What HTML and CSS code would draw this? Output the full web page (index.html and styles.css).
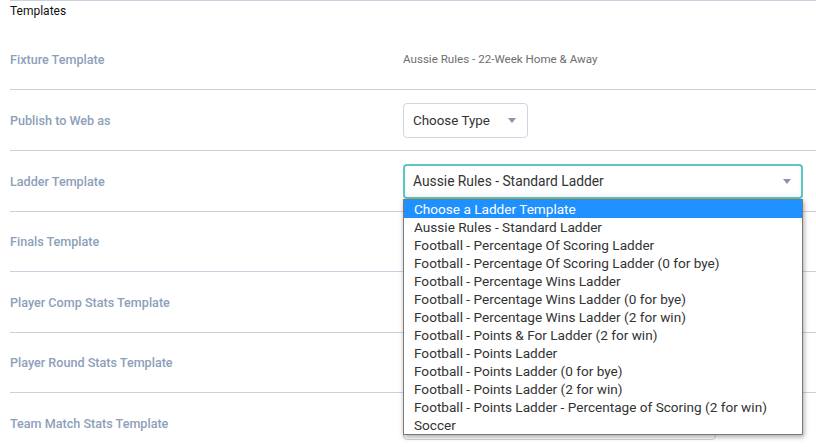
FILE: index.html
```html
<!DOCTYPE html>
<html>
<head>
<meta charset="utf-8">
<link rel="stylesheet" href="styles.css">
</head>
<body>
<div class="panel">
  <div class="header">Templates</div>
  <div class="row first">
    <div class="label">Fixture Template</div>
    <div class="value"><span class="static">Aussie Rules - 22-Week Home &amp; Away</span></div>
  </div>
  <div class="row">
    <div class="label">Publish to Web as</div>
    <div class="value"><div class="select small"><span>Choose Type</span><i class="caret"></i></div></div>
  </div>
  <div class="row">
    <div class="label">Ladder Template</div>
    <div class="value">
      <div class="select wide focus"><span>Aussie Rules - Standard Ladder</span><i class="caret"></i></div>
      <ul class="dropdown">
        <li class="active">Choose a Ladder Template</li>
        <li>Aussie Rules - Standard Ladder</li>
        <li>Football - Percentage Of Scoring Ladder</li>
        <li>Football - Percentage Of Scoring Ladder (0 for bye)</li>
        <li>Football - Percentage Wins Ladder</li>
        <li>Football - Percentage Wins Ladder (0 for bye)</li>
        <li>Football - Percentage Wins Ladder (2 for win)</li>
        <li>Football - Points &amp; For Ladder (2 for win)</li>
        <li>Football - Points Ladder</li>
        <li>Football - Points Ladder (0 for bye)</li>
        <li>Football - Points Ladder (2 for win)</li>
        <li>Football - Points Ladder - Percentage of Scoring (2 for win)</li>
        <li>Soccer</li>
      </ul>
    </div>
  </div>
  <div class="row">
    <div class="label">Finals Template</div>
    <div class="value"><div class="select mid"><span></span><i class="caret"></i></div></div>
  </div>
  <div class="row">
    <div class="label">Player Comp Stats Template</div>
    <div class="value"><div class="select mid"><span></span><i class="caret"></i></div></div>
  </div>
  <div class="row">
    <div class="label">Player Round Stats Template</div>
    <div class="value"><div class="select mid"><span></span><i class="caret"></i></div></div>
  </div>
  <div class="row">
    <div class="label">Team Match Stats Template</div>
    <div class="value"><div class="select mid"><span></span><i class="caret"></i></div></div>
  </div>
</div>
</body>
</html>
```
FILE: styles.css
```css
html, body {
  margin: 0;
  padding: 0;
  background: #fff;
  overflow: hidden;
}
body {
  font-family: Roboto, "Liberation Sans", sans-serif;
  padding-left: 10px;
}
.panel {
  border-top: 1px solid #c8d3e0;
}
.header {
  height: 28.6px;
  padding-top: 3px;
  font-size: 12px;
  color: #111;
  box-sizing: border-box;
}
.row {
  height: 60.4px;
  box-sizing: border-box;
  display: grid;
  grid-template-columns: 393px 1fr;
  align-items: center;
  border-top: 1px solid #c8d3e0;
}
.row.first {
  border-top: none;
  border-bottom: 1px solid #c8d3e0;
}
.row.first + .row { border-top: none; }
.label {
  font-size: 12.6px;
  font-weight: 500;
  color: #8d9fba;
  padding-top: 1px;
}
.value {
  position: relative;
  display: flex;
  align-items: center;
}
.static {
  font-size: 11.6px;
  color: #6e6e6e;
}
.select {
  height: 35px;
  box-sizing: border-box;
  border: 1px solid #cfd6e2;
  border-radius: 4px;
  display: flex;
  align-items: center;
  justify-content: space-between;
  padding: 0 11px 0 9px;
  font-size: 13.4px;
  color: #333;
  background: #fff;
}
.select.small { width: 125px; }
.select.mid { width: 313px; }
.select.wide {
  width: 400px;
  border: 2px solid #5cc5c5;
  padding: 0 10px 0 8px;
  font-size: 13.8px;
  box-shadow: inset 0 -3px 4px rgba(0,0,0,0.04);
}
.caret {
  width: 0;
  height: 0;
  border-left: 4px solid transparent;
  border-right: 4px solid transparent;
  border-top: 5px solid #8a95ab;
}
.dropdown {
  position: absolute;
  left: 0;
  top: 35px;
  width: 400px;
  box-sizing: border-box;
  margin: 0;
  padding: 0;
  list-style: none;
  background: #fff;
  border: 1px solid #7a7a7a;
  box-shadow: 1px 2px 5px rgba(0,0,0,0.35);
  z-index: 5;
}
.dropdown li {
  height: 18px;
  line-height: 18px;
  padding-left: 10px;
  font-size: 13.6px;
  color: #333;
  white-space: nowrap;
}
.dropdown li.active {
  background: #1e90ff;
  color: #fff;
}
```
